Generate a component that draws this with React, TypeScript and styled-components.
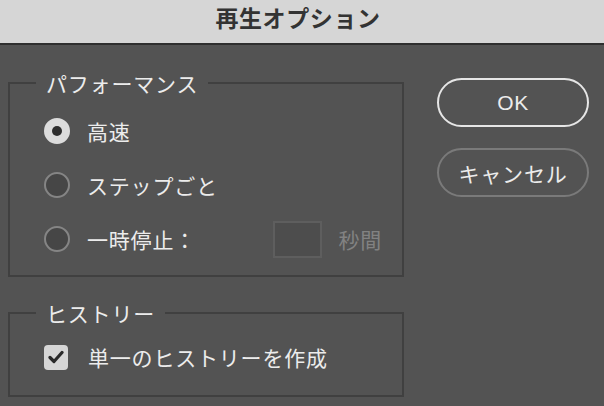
import React, { useState } from 'react';
import styled, { createGlobalStyle } from 'styled-components';

const Global = createGlobalStyle`
  html, body {
    margin: 0;
    padding: 0;
    background-color: #535353;
  }
  body {
    font-family: "Noto Sans CJK JP", "Noto Sans", sans-serif;
  }
`;

const Window = styled.div`
  width: 604px;
  height: 406px;
  background-color: #535353;
  display: flex;
  flex-direction: column;
  overflow: hidden;
`;

const TitleBar = styled.div`
  height: 45px;
  box-sizing: border-box;
  padding-bottom: 10px;
  padding-right: 8px;
  background-color: #d6d6d6;
  border-bottom: 2px solid #2f2f2f;
  display: flex;
  justify-content: center;
  align-items: center;
  color: #333333;
  font-size: 23px;
  font-weight: 700;
  letter-spacing: 0.6px;
`;

const Body = styled.div`
  display: flex;
  align-items: flex-start;
  gap: 33px;
  padding: 26px 0 0 8px;
`;

const Column = styled.div`
  width: 396px;
  display: flex;
  flex-direction: column;
  gap: 24px;
`;

const Group = styled.fieldset<{ $top: number; $bottom: number }>`
  margin: 0;
  padding: ${(p) => p.$top}px 0 ${(p) => p.$bottom}px 32px;
  border: 2px solid #404040;
  display: flex;
  flex-direction: column;
  gap: 16px;
  min-width: 0;
`;

const Legend = styled.legend`
  margin-left: -6px;
  padding: 0 10px;
  height: 24px;
  line-height: 24px;
  color: #ececec;
  font-size: 21px;
  letter-spacing: 0.8px;
`;

const Row = styled.label`
  height: 38px;
  display: flex;
  align-items: center;
  gap: 17px;
  color: #ececec;
  font-size: 21px;
  letter-spacing: 0.8px;
  cursor: default;
`;

const Radio = styled.span<{ $on: boolean }>`
  width: 26px;
  height: 26px;
  box-sizing: border-box;
  border-radius: 50%;
  border: 2px solid ${(p) => (p.$on ? '#dcdcdc' : '#858585')};
  background-color: ${(p) => (p.$on ? '#dcdcdc' : '#464646')};
  display: flex;
  justify-content: center;
  align-items: center;
  flex-shrink: 0;
  margin-left: 2px;

  &::after {
    content: '';
    width: 10px;
    height: 10px;
    border-radius: 50%;
    background-color: #2e2e2e;
    display: ${(p) => (p.$on ? 'block' : 'none')};
  }
`;

const Check = styled.span`
  width: 24px;
  height: 25px;
  border-radius: 4px;
  background-color: #d6d6d6;
  display: flex;
  justify-content: center;
  align-items: center;
  flex-shrink: 0;
  margin-left: 2px;
  margin-right: 3px;
`;

const Spacer = styled.span`
  flex: 1;
`;

const NumberBox = styled.span`
  width: 49px;
  height: 37px;
  box-sizing: border-box;
  border: 2px solid #5e5e5e;
  background-color: #4d4d4d;
`;

const Unit = styled.span`
  color: #828282;
  margin-right: 20px;
  margin-left: -1px;
`;

const Buttons = styled.div`
  display: flex;
  flex-direction: column;
  gap: 21px;
  padding-top: 7px;
`;

const Button = styled.button<{ $primary?: boolean }>`
  width: 152px;
  height: 49px;
  box-sizing: border-box;
  border-radius: 25px;
  border: 2px solid ${(p) => (p.$primary ? '#e6e6e6' : '#7a7a7a')};
  background-color: transparent;
  color: #ececec;
  font-family: ${(p) =>
    p.$primary ? '"Liberation Sans", Arial, sans-serif' : '"Noto Sans CJK JP", sans-serif'};
  font-size: 21px;
  letter-spacing: ${(p) => (p.$primary ? '0.5px' : '0.8px')};
  padding: 0;
  display: flex;
  justify-content: center;
  align-items: center;
`;

const options = ['高速', 'ステップごと', '一時停止：'];

export default function App() {
  const [mode, setMode] = useState(0);
  const [single, setSingle] = useState(true);

  return (
    <Window>
      <Global />
      <TitleBar>再生オプション</TitleBar>
      <Body>
        <Column>
          <Group $top={17} $bottom={17}>
            <Legend>パフォーマンス</Legend>
            {options.map((label, i) => (
              <Row key={label} onClick={() => setMode(i)}>
                <Radio $on={mode === i} />
                {label}
                {i === 2 && (
                  <>
                    <Spacer />
                    <NumberBox />
                    <Unit>秒間</Unit>
                  </>
                )}
              </Row>
            ))}
          </Group>
          <Group $top={13} $bottom={19}>
            <Legend>ヒストリー</Legend>
            <Row onClick={() => setSingle(!single)}>
              <Check>
                {single && (
                  <svg width="16" height="14" viewBox="0 0 16 14">
                    <path
                      d="M2 7.5 L6 11.5 L14 2.5"
                      fill="none"
                      stroke="#2a2a2a"
                      strokeWidth="3.2"
                      strokeLinecap="round"
                      strokeLinejoin="round"
                    />
                  </svg>
                )}
              </Check>
              単一のヒストリーを作成
            </Row>
          </Group>
        </Column>
        <Buttons>
          <Button $primary>OK</Button>
          <Button>キャンセル</Button>
        </Buttons>
      </Body>
    </Window>
  );
}
